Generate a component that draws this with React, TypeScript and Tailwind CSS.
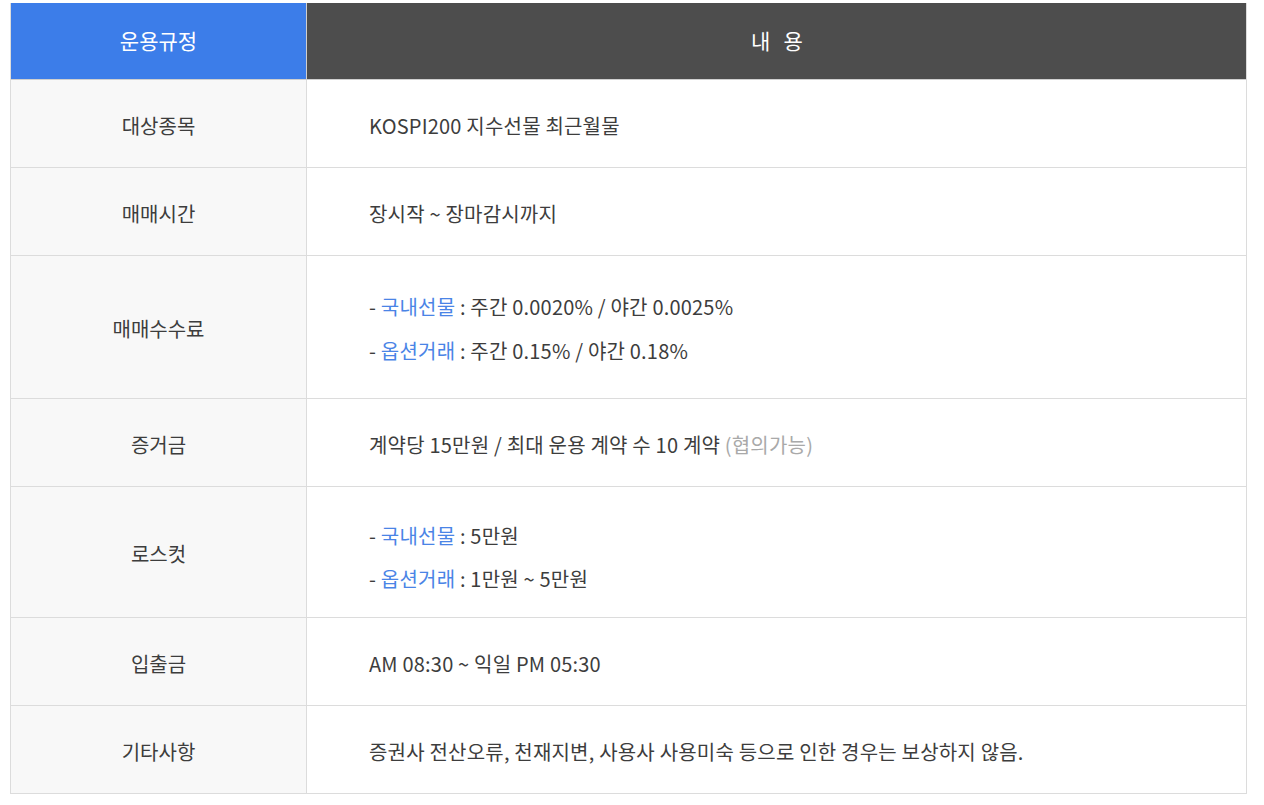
const rows: { label: string; height: string; content: React.ReactNode }[] = [
  {
    label: "대상종목",
    height: "h-[88px]",
    content: <p>KOSPI200 지수선물 최근월물</p>,
  },
  {
    label: "매매시간",
    height: "h-[88px]",
    content: <p>장시작 ~ 장마감시까지</p>,
  },
  {
    label: "매매수수료",
    height: "h-[143px]",
    content: (
      <div className="flex flex-col gap-[16px]">
        <p>
          - <span className="text-[#4a84e6]">국내선물</span> : 주간 0.0020% / 야간 0.0025%
        </p>
        <p>
          - <span className="text-[#4a84e6]">옵션거래</span> : 주간 0.15% / 야간 0.18%
        </p>
      </div>
    ),
  },
  {
    label: "증거금",
    height: "h-[88px]",
    content: (
      <p>
        계약당 15만원 / 최대 운용 계약 수 10 계약 <span className="text-[#a9a9a9]">(협의가능)</span>
      </p>
    ),
  },
  {
    label: "로스컷",
    height: "h-[131px]",
    content: (
      <div className="flex flex-col gap-[15px] pt-[6px]">
        <p>
          - <span className="text-[#4a84e6]">국내선물</span> : 5만원
        </p>
        <p>
          - <span className="text-[#4a84e6]">옵션거래</span> : 1만원 ~ 5만원
        </p>
      </div>
    ),
  },
  {
    label: "입출금",
    height: "h-[88px]",
    content: <p>AM 08:30 ~ 익일 PM 05:30</p>,
  },
  {
    label: "기타사항",
    height: "h-[87px]",
    content: <p>증권사 전산오류, 천재지변, 사용사 사용미숙 등으로 인한 경우는 보상하지 않음.</p>,
  },
];

export default function App() {
  return (
    <div
      className="min-h-[805px] bg-white pl-[10px] pt-[3px] text-[#3d3d3d]"
      style={{ fontFamily: '"Noto Sans CJK KR", "Noto Sans", sans-serif' }}
    >
      <div className="w-[1237px] border-x border-b border-[#dcdcdc]">
        {/* header */}
        <div className="grid h-[77px] grid-cols-[295px_1fr] border-b border-[#cfcfcf] text-[21px] text-white">
          <div className="flex items-center justify-center bg-[#3c7de9]">운용규정</div>
          <div className="flex items-center justify-center border-l border-[#cfcfcf] bg-[#4d4d4d] pl-[5px] tracking-[0.2em]">
            내 용
          </div>
        </div>

        {rows.map((row, i) => (
          <div
            key={row.label}
            className={`grid grid-cols-[295px_1fr] ${row.height} ${
              i < rows.length - 1 ? "border-b border-[#dcdcdc]" : ""
            } leading-[28px]`}
          >
            <div className="flex items-center justify-center bg-[#f8f8f8] pt-[4px] text-[20px]">
              {row.label}
            </div>
            <div className="flex items-center border-l border-[#dcdcdc] pl-[62px] pt-[4px] text-[20px] tracking-[0.2px]">
              {row.content}
            </div>
          </div>
        ))}
      </div>
    </div>
  );
}
